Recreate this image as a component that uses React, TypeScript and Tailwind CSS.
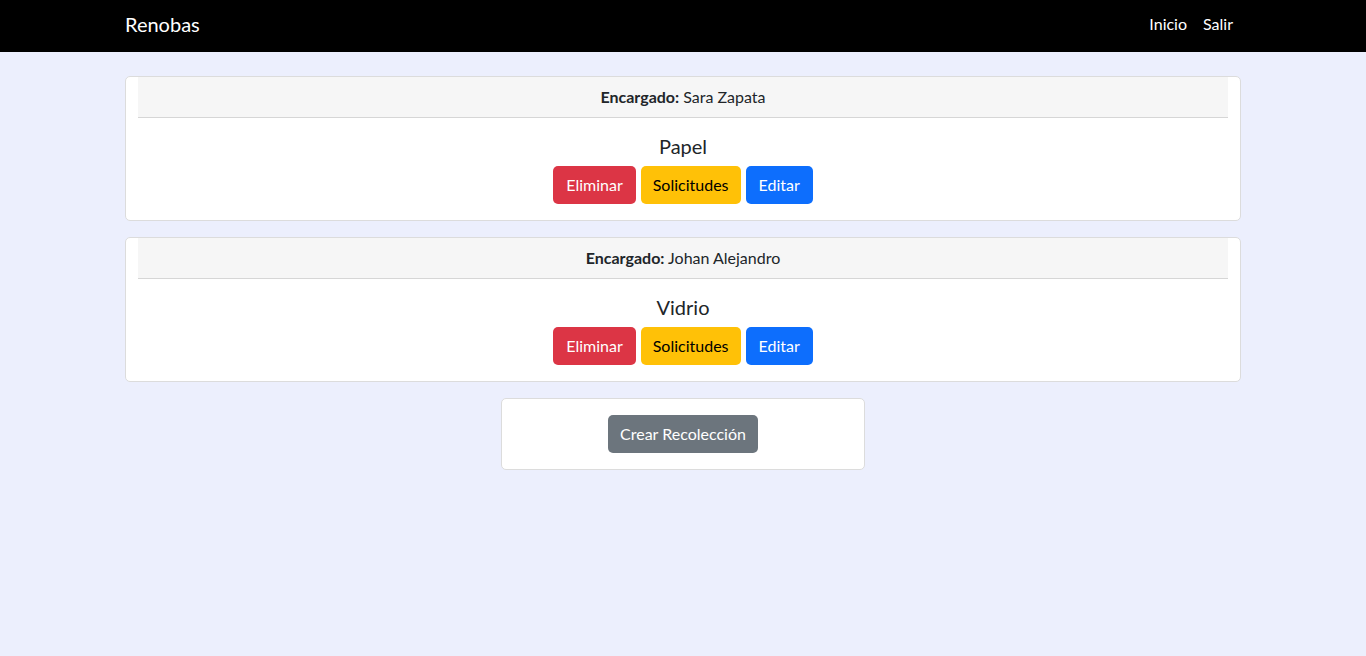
const recolecciones = [
  { id: 1, encargado: 'Sara Zapata', material: 'Papel' },
  { id: 2, encargado: 'Johan Alejandro', material: 'Vidrio' },
];

const App = () => {
  return (
    <div className="min-h-screen bg-[#eceffd] text-[#212529] font-['Lato','Noto_Sans',sans-serif]">
      <nav className="h-[52px] bg-black">
        <div className="mx-auto flex h-full w-[1116px] items-center justify-between pb-[4px]">
          <a className="text-[20px] text-white">Renobas</a>
          <div className="mr-[8px] flex gap-[16px] text-[16px] text-white">
            <a>Inicio</a>
            <a>Salir</a>
          </div>
        </div>
      </nav>

      <main className="mx-auto w-[1116px] pt-[24px]">
        {recolecciones.map((r) => (
          <div key={r.id} className="mb-[16px] rounded-[5px] border border-[#dcdcdc] bg-white">
            <div className="mx-[12px] border-b border-[#d6d6d6] bg-[#f6f6f6] py-[8px] text-center text-[16px] leading-[24px]">
              <span className="font-bold">Encargado:</span> {r.encargado}
            </div>
            <div className="p-[16px] text-center">
              <h5 className="text-[20px] leading-[24px]">{r.material}</h5>
              <div className="mt-[8px] flex justify-center gap-[5px] text-[16px]">
                <button className="h-[38px] rounded-[5px] bg-[#dc3545] px-[13px] text-white">Eliminar</button>
                <button className="h-[38px] rounded-[5px] bg-[#ffc107] px-[12px] text-black">Solicitudes</button>
                <button className="h-[38px] rounded-[5px] bg-[#0d6efd] px-[13px] text-white">Editar</button>
              </div>
            </div>
          </div>
        ))}

        <div className="mx-auto w-[364px] rounded-[5px] border border-[#dcdcdc] bg-white p-[16px] text-center">
          <button className="h-[38px] rounded-[5px] bg-[#6c757d] px-[12px] text-[16px] text-white">Crear Recolección</button>
        </div>
      </main>
    </div>
  );
};

export default App;
